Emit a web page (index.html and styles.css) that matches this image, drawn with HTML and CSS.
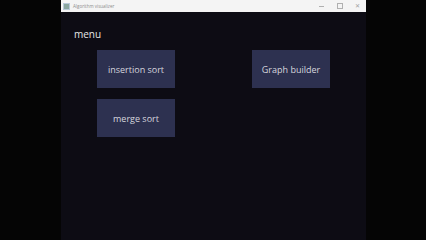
FILE: index.html
```html
<!DOCTYPE html>
<html lang="en">
<head>
  <meta charset="UTF-8">
  <meta name="viewport" content="width=device-width, initial-scale=1.0">
  <title>Algorithm visualizer</title>
  <link rel="stylesheet" href="styles.css">
</head>
<body>
  <div class="window">
    <div class="titlebar">
      <div class="app-icon"></div>
      <span class="title">Algorithm visualizer</span>
      <div class="controls">
        <span class="ctl ctl-min"></span>
        <span class="ctl ctl-max"></span>
        <span class="ctl ctl-close">&#x2715;</span>
      </div>
    </div>

    <div class="content">
      <div class="menu-label">menu</div>
      <div class="buttons">
        <div class="menu-btn">insertion sort</div>
        <div class="menu-btn">Graph builder</div>
        <div class="menu-btn">merge sort</div>
      </div>
    </div>
  </div>
</body>
</html>
```

FILE: styles.css
```css
body {
  margin: 0;
  padding: 0;
  background-color: #050505;
  font-family: "Open Sans", "Noto Sans", sans-serif;
  height: 240px;
  overflow: hidden;
}

.window {
  margin-left: 61px;
  width: 305px;
  height: 240px;
  background-color: #0d0c14;
  display: flex;
  flex-direction: column;
}

.titlebar {
  height: 12px;
  background-color: #f4f4f4;
  display: flex;
  align-items: center;
  padding-left: 2px;
}

.app-icon {
  width: 5px;
  height: 5px;
  background-color: #8aa6a0;
  border: 1px solid #b8c8d8;
}

.title {
  font-size: 4.5px;
  color: #8c8c8c;
  margin-left: 3px;
}

.controls {
  margin-left: auto;
  display: flex;
  align-items: center;
  gap: 11px;
  padding-right: 5px;
}

.ctl {
  width: 7px;
  height: 7px;
  display: flex;
  align-items: center;
  justify-content: center;
  font-size: 6px;
  color: #a0a0a0;
}

.ctl-min::before {
  content: "";
  width: 5px;
  height: 1px;
  background-color: #b0b0b0;
}

.ctl-max::before {
  content: "";
  width: 4px;
  height: 4px;
  border: 1px solid #b0b0b0;
}

.content {
  padding: 16px 0 0 13px;
}

.menu-label {
  color: #e6e6e6;
  font-size: 10px;
  line-height: 12px;
}

.buttons {
  display: grid;
  grid-template-columns: 78px 78px;
  column-gap: 77px;
  row-gap: 11px;
  margin-top: 10px;
  margin-left: 23px;
}

.menu-btn {
  height: 38px;
  padding-top: 1px;
  box-sizing: border-box;
  background-color: #2d3150;
  color: #d6d6de;
  font-size: 9px;
  display: flex;
  align-items: center;
  justify-content: center;
}
```
